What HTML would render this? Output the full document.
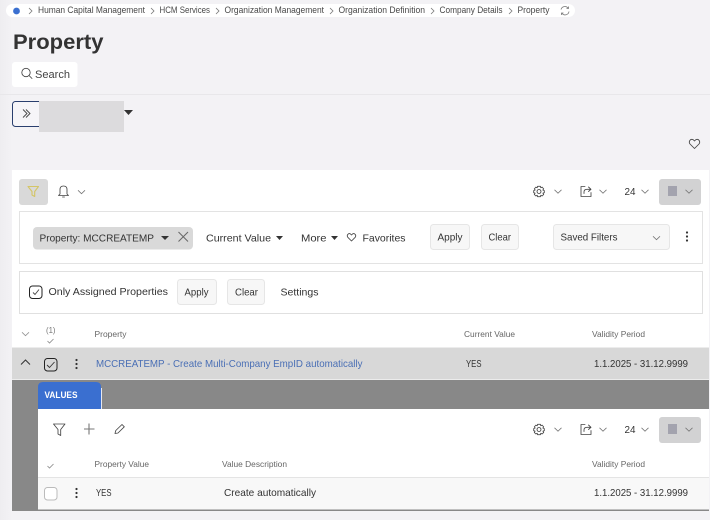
<!DOCTYPE html>
<html><head><meta charset="utf-8"><title>Property</title>
<style>
html,body{margin:0;padding:0;width:710px;height:520px;overflow:hidden;background:#f3f2f5}
svg{display:block;font-family:"Liberation Sans",sans-serif;fill:#333;font-size:10.4px}
.ic{fill:none;stroke:#444;stroke-width:.85;stroke-linejoin:round;stroke-linecap:round}
.ch{fill:none;stroke:#777;stroke-width:.8}
.h{font-size:8.6px;fill:#666}
.bc{font-size:9.2px;fill:#484848}
.b{fill:#f7f7f7;stroke:#e6e6e6}
</style></head><body>
<svg width="710" height="520" viewBox="0 0 710 520" xmlns="http://www.w3.org/2000/svg">
<defs>
<linearGradient id="lg" x1="0" x2="1" y1="0" y2="0"><stop offset="0" stop-color="#eeedf0"/><stop offset="1" stop-color="#f3f2f5"/></linearGradient>
<g id="chev"><path class="ch" d="M-3.5 -1.7L0 1.7L3.5 -1.7"/></g>
<g id="dots"><circle cx="0" cy="-4" r="1.1" fill="#333"/><circle cx="0" cy="0" r="1.1" fill="#333"/><circle cx="0" cy="4" r="1.1" fill="#333"/></g>
<g id="gear"><circle r="2" class="ic"/><path class="ic" d="M-1.4 -5.2H1.4L1.8 -3.8L3.1 -4.4L4.7 -2.6L3.8 -1.5L5.3 -.9V1.2L3.9 1.6L4.7 2.9L3.1 4.5L1.8 3.8L1.4 5.2H-1.4L-1.8 3.8L-3.1 4.5L-4.7 2.9L-3.9 1.6L-5.3 1.2V-.9L-3.8 -1.5L-4.7 -2.6L-3.1 -4.4L-1.8 -3.8Z"/></g>
<g id="share"><path class="ic" d="M-1 -5H-5V5H5V1"/><path class="ic" d="M-2 2V0.5Q-2 -2.2 1 -2.2H4.5M2.5 -4.5L5 -2.2L2.5 0"/></g>
<g id="toolbar">
<use href="#gear" x="539" y="0"/><use href="#chev" x="558" y="0"/>
<use href="#share" x="586" y="0"/><use href="#chev" x="603" y="0"/>
<text x="624.5" y="3.7" textLength="11" lengthAdjust="spacingAndGlyphs" font-size="10.4">24</text><use href="#chev" x="645" y="0"/>
<rect x="659" y="-12.5" width="42" height="26" rx="3" fill="#d2d2d3"/>
<rect x="668" y="-5.5" width="9" height="10" fill="#a3a3ae"/><use href="#chev" x="689" y="0"/>
</g>
<g id="chk"><path fill="none" stroke="#888" stroke-width=".8" d="M-3 0L-1 2L3 -2"/></g>
</defs>

<rect width="12" height="520" fill="url(#lg)"/>

<!-- breadcrumb -->
<rect x="6" y="4" width="214" height="13" rx="6.5" fill="#fff"/>
<rect x="200" y="4" width="375" height="13" rx="6.5" fill="#fff"/>
<circle cx="16.5" cy="11" r="3.4" fill="#3a6fd0"/>
<path class="ch" d="M29 8L32 11L29 14M151 8L154 11L151 14M216 8L219 11L216 14M330 8L333 11L330 14M431 8L434 11L431 14M509 8L512 11L509 14"/>
<text class="bc" x="38" y="13" textLength="107" lengthAdjust="spacingAndGlyphs">Human Capital Management</text>
<text class="bc" x="159.5" y="13" textLength="50.5" lengthAdjust="spacingAndGlyphs">HCM Services</text>
<text class="bc" x="224.5" y="13" textLength="99.5" lengthAdjust="spacingAndGlyphs">Organization Management</text>
<text class="bc" x="338.5" y="13" textLength="86.5" lengthAdjust="spacingAndGlyphs">Organization Definition</text>
<text class="bc" x="439.5" y="13" textLength="63" lengthAdjust="spacingAndGlyphs">Company Details</text>
<text class="bc" x="517.5" y="13" textLength="32" lengthAdjust="spacingAndGlyphs">Property</text>
<path fill="none" stroke="#777" stroke-width=".8" d="M561 9.5A4 4 0 0 1 568 8M569 11.5A4 4 0 0 1 562 13.5M568.5 6.5V8.5H566.5M561.5 15V13H563.5"/>

<!-- title -->
<text x="13" y="49" font-size="21.5" font-weight="700" fill="#333" textLength="90.5" lengthAdjust="spacingAndGlyphs">Property</text>
<rect x="12" y="62" width="65.5" height="25" rx="3" fill="#fff"/>
<circle cx="26" cy="72.5" r="4.2" class="ic"/><path class="ic" d="M29 75.5L32 78.5"/>
<text x="35" y="78" font-size="11" fill="#444" textLength="35" lengthAdjust="spacingAndGlyphs">Search</text>
<rect x="0" y="94" width="710" height="1" fill="#e8e7ea"/>

<!-- expand -->
<rect x="12.5" y="101.5" width="30" height="25" rx="3" fill="#f6f5f8" stroke="#2a3f6e"/>
<path fill="none" stroke="#444" stroke-width=".9" d="M23 109.5L27 113.5L23 117.5M26 109.5L30 113.5L26 117.5"/>
<rect x="39" y="101" width="85" height="31" fill="#dcdbdd"/>
<path d="M124 110H133L128.5 115Z" fill="#333"/>
<path class="ic" d="M694.5 148.5L690 144Q688.8 142.5 689.6 140.8Q691 138.5 693.2 139.7L694.5 141L695.8 139.7Q698 138.5 699.4 140.8Q700.2 142.5 699 144Z"/>

<!-- card -->
<rect x="12" y="170" width="697" height="341" fill="#fff"/>
<rect x="19" y="179" width="29" height="26" rx="3" fill="#d9d9d9"/>
<path fill="none" stroke="#d4c566" stroke-width="1.1" stroke-linejoin="round" d="M28 186.5H38.5L34.7 191.5V196.5L32 195V191.5Z"/>
<path class="ic" d="M60 194V189.5Q60 186 63.5 186Q67 186 67 189.5V194L68.5 195.5H58.5ZM62.5 197H64.5"/>
<use href="#chev" x="81.5" y="192"/>
<use href="#toolbar" y="191.5"/>

<!-- filter panel -->
<rect x="19.5" y="211.5" width="683" height="52" fill="#fff" stroke="#e3e3e3"/>
<rect x="33" y="227" width="160" height="22.5" rx="4" fill="#d9d9d9"/>
<text x="39.5" y="241.5" textLength="114.5" lengthAdjust="spacingAndGlyphs">Property: MCCREATEMP</text>
<path d="M161 236H169L165 240Z" fill="#333"/>
<path fill="none" stroke="#666" d="M178.5 232L188 241.5M188 232L178.5 241.5"/>
<text x="206" y="241.5" textLength="65" lengthAdjust="spacingAndGlyphs">Current Value</text>
<path d="M276 236H283L279.5 240Z" fill="#333"/>
<text x="301" y="241.5" textLength="25.5" lengthAdjust="spacingAndGlyphs">More</text>
<path d="M331 236H338L334.5 240Z" fill="#333"/>
<path class="ic" d="M351.5 241L347.8 237.3Q346.8 235.8 347.6 234.6Q349 233 350.5 234L351.5 235L352.5 234Q354 233 355.4 234.6Q356.2 235.8 355.2 237.3Z"/>
<text x="362.5" y="241.5" textLength="43" lengthAdjust="spacingAndGlyphs">Favorites</text>
<rect class="b" x="430.5" y="224.5" width="39" height="25" rx="3"/>
<text x="437.5" y="240.5" textLength="25" lengthAdjust="spacingAndGlyphs">Apply</text>
<rect class="b" x="481.5" y="224.5" width="37" height="25" rx="3"/>
<text x="488.5" y="240.5" textLength="22.5" lengthAdjust="spacingAndGlyphs">Clear</text>
<rect class="b" x="553.5" y="224.5" width="116" height="25" rx="3"/>
<text x="560.5" y="240.5" textLength="57" lengthAdjust="spacingAndGlyphs">Saved Filters</text>
<use href="#chev" x="656.5" y="238"/>
<use href="#dots" x="687" y="236.5"/>

<!-- panel 2 -->
<rect x="19.5" y="271.5" width="683" height="42" fill="#fff" stroke="#e0e0e0"/>
<rect x="29.5" y="286" width="12.5" height="12.5" rx="3" fill="#fff" stroke="#222"/>
<path fill="none" stroke="#444" stroke-width=".9" d="M33 292.5L35 294.5L39 289.5"/>
<text x="48.5" y="295" textLength="119.5" lengthAdjust="spacingAndGlyphs">Only Assigned Properties</text>
<rect class="b" x="177.5" y="279.5" width="39" height="25" rx="3"/>
<text x="184.5" y="295.5" textLength="24" lengthAdjust="spacingAndGlyphs">Apply</text>
<rect class="b" x="227.5" y="279.5" width="37" height="25" rx="3"/>
<text x="235" y="295.5" textLength="23" lengthAdjust="spacingAndGlyphs">Clear</text>
<text x="280.5" y="295.5" textLength="38" lengthAdjust="spacingAndGlyphs">Settings</text>

<!-- table header -->
<use href="#chev" x="25.5" y="334" opacity=".8"/>
<text x="46" y="333" font-size="8.6" fill="#777" textLength="9.5" lengthAdjust="spacingAndGlyphs">(1)</text>
<use href="#chk" x="50.5" y="341"/>
<text class="h" x="94.5" y="337" textLength="32" lengthAdjust="spacingAndGlyphs">Property</text>
<text class="h" x="464" y="337" textLength="51" lengthAdjust="spacingAndGlyphs">Current Value</text>
<text class="h" x="592" y="337" textLength="53" lengthAdjust="spacingAndGlyphs">Validity Period</text>

<!-- row -->
<rect x="12" y="347.5" width="697" height="32" fill="#d8d8d8"/>
<path fill="none" stroke="#333" d="M21 364.5L25.5 360L30 364.5"/>
<rect x="44.5" y="358.5" width="12.5" height="12.5" rx="3" fill="#d8d8d8" stroke="#222"/>
<path fill="none" stroke="#333" stroke-width=".9" d="M47 365L49.5 367.5L54.5 362"/>
<use href="#dots" x="76.5" y="364"/>
<text x="96" y="367" fill="#4a6fb5" textLength="266.5" lengthAdjust="spacingAndGlyphs">MCCREATEMP - Create Multi-Company EmpID automatically</text>
<text x="466" y="367" textLength="15.5" lengthAdjust="spacingAndGlyphs">YES</text>
<text x="594" y="367" textLength="94" lengthAdjust="spacingAndGlyphs">1.1.2025 - 31.12.9999</text>

<!-- detail -->
<rect x="12" y="380" width="697" height="131" fill="#888"/>
<path d="M38 409V387Q38 382 43 382H96Q101 382 101 387V409Z" fill="#3a6fd0"/>
<rect x="101" y="388" width="1" height="21" fill="#e8e8ee"/>
<text x="44.5" y="398" font-size="9.5" font-weight="700" fill="#fff" textLength="33" lengthAdjust="spacingAndGlyphs">VALUES</text>
<rect x="38" y="409" width="671" height="100.5" fill="#fff"/>
<path class="ic" d="M53.5 424H65L60.7 429.5V435.5L58 434V429.5Z"/>
<path fill="none" stroke="#777" stroke-width="1.1" d="M84 429H94.5M89 423.5V434.5"/>
<path class="ic" d="M115 433.5L115.8 430.5L122 424.5L124.3 426.8L118 433Z"/>
<use href="#toolbar" y="429.5"/>
<use href="#chk" x="50.5" y="466"/>
<text class="h" x="94.5" y="467" textLength="54.5" lengthAdjust="spacingAndGlyphs">Property Value</text>
<text class="h" x="222" y="467" textLength="65" lengthAdjust="spacingAndGlyphs">Value Description</text>
<text class="h" x="592" y="467" textLength="53" lengthAdjust="spacingAndGlyphs">Validity Period</text>
<rect x="38" y="477" width="671" height="1" fill="#e4e4e4"/>
<rect x="38" y="478" width="671" height="31.5" fill="#f8f8f8"/>
<rect x="44.5" y="487.5" width="12.5" height="12.5" rx="3" fill="#fff" stroke="#bbb"/>
<use href="#dots" x="76.5" y="493"/>
<text x="96" y="496" textLength="15.5" lengthAdjust="spacingAndGlyphs">YES</text>
<text x="224" y="496" textLength="92" lengthAdjust="spacingAndGlyphs">Create automatically</text>
<text x="594" y="496" textLength="94" lengthAdjust="spacingAndGlyphs">1.1.2025 - 31.12.9999</text>
</svg>
</body></html>
